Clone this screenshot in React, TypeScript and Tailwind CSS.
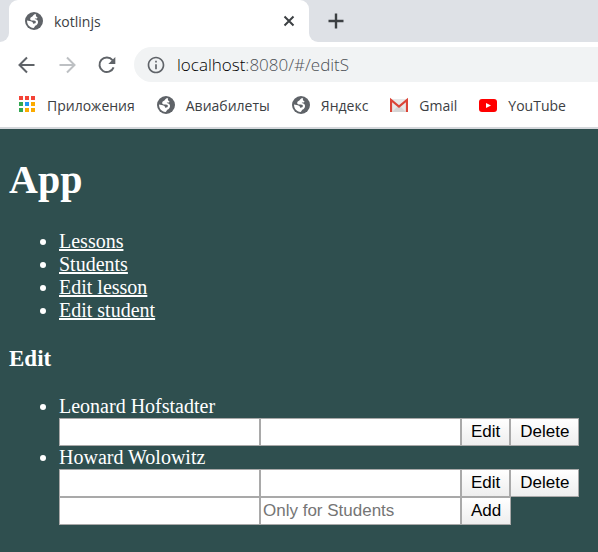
import type { ReactNode } from "react";
import { MdInfoOutline } from "react-icons/md";

function Globe() {
  return (
    <svg viewBox="0 0 18 18" className="size-[18px] shrink-0" aria-hidden="true">
      <circle cx="9" cy="9" r="9" fill="#5f6368" />
      <path
        d="M2 8.6L5.8 9.3C7.6 9.7 8.2 10.6 8 11.8C10 11.8 11.2 11 10.8 9.6C10.5 8.6 9.4 8.6 8 8.6C6 8.6 4.9 8 5.2 6.6C5.6 5 7.4 5 8 3.8C8.4 2.8 9.6 2 11.2 2.3C10.4 3.8 11.2 5 12.4 5.2C12.5 6.6 11.6 6.7 10.4 6.5C9.6 6.5 9.6 7 10.6 7.2C12.6 7.6 13.2 8.8 13 10.4C12.8 12.6 11.2 13.2 10.2 13.8C9.6 14.6 9.4 15.8 8.4 16C4.8 15.8 2 12.8 2 8.6Z"
        fill="#fff"
      />
    </svg>
  );
}

function AppsIcon() {
  const colors = ["#f44336", "#f44336", "#f44336", "#34a853", "#2196f3", "#fbab00", "#34a853", "#fbab00", "#fbab00"];
  return (
    <svg viewBox="0 0 18 18" className="size-[18px] shrink-0" aria-hidden="true">
      {colors.map((c, i) => (
        <rect key={i} x={1 + (i % 3) * 6} y={Math.floor(i / 3) * 6} width="4" height="4" fill={c} />
      ))}
    </svg>
  );
}

function GmailIcon() {
  return (
    <svg viewBox="0 0 18 18" className="size-[18px] shrink-0" aria-hidden="true">
      <rect x="0" y="3" width="18" height="13" rx="1" fill="#e8e8e8" />
      <path d="M2 16L9 9L16 16Z" fill="#d5d5d5" />
      <path d="M1 16V4L9 10.5L17 4V16" fill="none" stroke="#db4437" strokeWidth="2.2" />
    </svg>
  );
}

function YouTubeIcon() {
  return (
    <svg viewBox="0 0 18 18" className="size-[18px] shrink-0" aria-hidden="true">
      <rect x="0" y="3" width="18" height="13" rx="3" fill="#f00" />
      <path d="M7 7L12 9.5L7 12Z" fill="#fff" />
    </svg>
  );
}

function Stroke({ d, width = 2 }: { d: string; width?: number }) {
  return (
    <svg viewBox="0 0 22 22" className="size-[22px]" fill="none" stroke="currentColor" strokeWidth={width} aria-hidden="true">
      <path d={d} />
    </svg>
  );
}

function Bookmark({ icon, children }: { icon: ReactNode; children: ReactNode }) {
  return (
    <a href="#" className="flex items-center gap-[11px] whitespace-nowrap">
      {icon}
      {children}
    </a>
  );
}

const field =
  "h-7 w-[201px] border border-[#a9a9a9] bg-white px-0.5 font-['Liberation_Sans',Arial,sans-serif] text-[17px] text-black outline-none placeholder:text-[#757575]";
const action =
  "h-7 border border-[#a9a9a9] bg-linear-to-b from-white to-[#eeeeee] px-[9px] font-['Liberation_Sans',Arial,sans-serif] text-[17px] leading-5 text-black";

function Student({ name }: { name: string }) {
  return (
    <li>
      {name}
      <div className="flex">
        <input aria-label={`${name}: first name`} className={field} />
        <input aria-label={`${name}: last name`} className={field} />
        <button className={action}>Edit</button>
        <button className={action}>Delete</button>
      </div>
    </li>
  );
}

export default function App() {
  return (
    <div className="flex min-h-screen flex-col bg-[#2f4f4f]">
      <header className="bg-white font-['Open_Sans','Noto_Sans',sans-serif] text-[14px] text-[#3c4043]">
        <div className="flex h-[42px] bg-[#dee1e6]">
          <div className="w-[9px] bg-white">
            <div className="h-full rounded-br-[9px] bg-[#dee1e6]" />
          </div>
          <div className="bg-[#dee1e6]">
            <div className="flex h-full w-[300px] items-center rounded-t-[9px] bg-white pr-[9px] pl-4">
              <Globe />
              <span className="ml-[11px] flex-1">kotlinjs</span>
              <button aria-label="Close tab">
                <Stroke d="M6.5 6.5L15.5 15.5M15.5 6.5L6.5 15.5" />
              </button>
            </div>
          </div>
          <div className="flex flex-1 bg-white">
            <div className="flex flex-1 items-center rounded-bl-[9px] bg-[#dee1e6] pl-4">
              <button aria-label="New tab">
                <Stroke d="M11 3.5V18.5M3.5 11H18.5" width={2.4} />
              </button>
            </div>
          </div>
        </div>
        <div className="flex h-[45px] items-center pl-4 text-[#5f6368]">
          <button aria-label="Back">
            <Stroke d="M18.5 11H4M11 3.5L3.5 11L11 18.5" />
          </button>
          <button aria-label="Forward" className="ml-[18px] text-[#bdc0c3]">
            <Stroke d="M3.5 11H18M11 3.5L18.5 11L11 18.5" />
          </button>
          <button aria-label="Reload" className="ml-[18px]">
            <svg viewBox="0 0 22 22" className="size-[22px]" aria-hidden="true">
              <path d="M17.6 13.4A7.3 7.3 0 1 1 16.5 6.2" fill="none" stroke="currentColor" strokeWidth="2" />
              <path d="M19.3 3V10H12.3Z" fill="currentColor" />
            </svg>
          </button>
          <div className="ml-4 flex h-[35px] flex-1 items-center rounded-l-full bg-[#f1f3f4] pl-3">
            <MdInfoOutline className="size-5" />
            <span className="ml-[11px] text-[17px] font-light text-[#4d5156]">
              <span className="text-black">localhost</span>:8080/#/editS
            </span>
          </div>
        </div>
        <nav className="flex h-[42px] items-center gap-[22px] border-b-2 border-[#d5d8dc] pb-1 pl-[18px]">
          <Bookmark icon={<AppsIcon />}>Приложения</Bookmark>
          <Bookmark icon={<Globe />}>Авиабилеты</Bookmark>
          <Bookmark icon={<Globe />}>Яндекс</Bookmark>
          <Bookmark icon={<GmailIcon />}>Gmail</Bookmark>
          <Bookmark icon={<YouTubeIcon />}>YouTube</Bookmark>
        </nav>
      </header>
      <main className="px-[9px] pt-7 font-['Liberation_Serif','Times_New_Roman',serif] text-[20px] leading-[23px] text-white">
        <h1 className="text-[40px] leading-[46px] font-bold">App</h1>
        <ul className="mt-[27px] list-disc pl-[50px]">
          <li><a href="#/lessons" className="underline decoration-2">Lessons</a></li>
          <li><a href="#/students" className="underline decoration-2">Students</a></li>
          <li><a href="#/editL" className="underline decoration-2">Edit lesson</a></li>
          <li><a href="#/editS" className="underline decoration-2">Edit student</a></li>
        </ul>
        <h3 className="mt-[23px] text-[23px] leading-[27px] font-bold">Edit</h3>
        <ul className="mt-[23px] list-disc pl-[50px]">
          <Student name="Leonard Hofstadter" />
          <Student name="Howard Wolowitz" />
          <li className="flex">
            <input aria-label="New first name" className={field} />
            <input aria-label="New last name" placeholder="Only for Students" className={field} />
            <button className={action}>Add</button>
          </li>
        </ul>
      </main>
    </div>
  );
}
